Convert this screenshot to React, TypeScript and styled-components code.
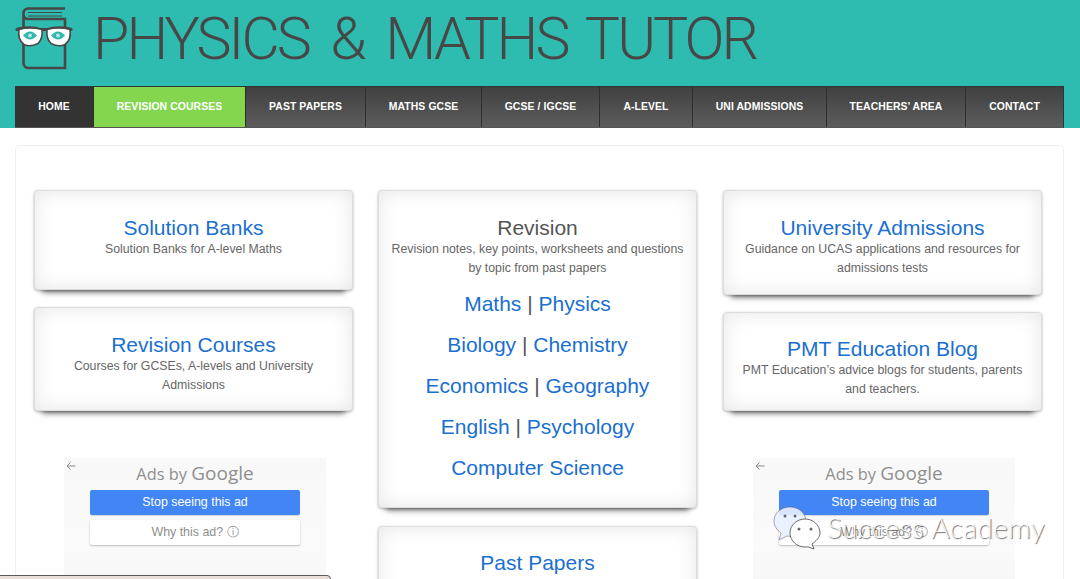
import React from "react";
import styled, { createGlobalStyle } from "styled-components";

const Global = createGlobalStyle`
  html, body { margin: 0; padding: 0; background: #fff; height: 579px; overflow: hidden; }
  body { font-family: "Liberation Sans", Arial, sans-serif; }
  * { box-sizing: border-box; }
`;

const Page = styled.div`
  position: relative;
  width: 1080px;
  height: 579px;
  overflow: hidden;
  background: #fff;
`;

const Header = styled.header`
  height: 128px;
  background: #2fbcb0;
  padding: 0 16px 0 15px;
  display: flex;
  flex-direction: column;
`;

const Brand = styled.div`
  height: 86px;
  display: flex;
  align-items: flex-start;
  color: #474747;
`;

const Logo = styled.svg`
  width: 60px;
  height: 68px;
  margin-top: 5px;
  flex: none;
`;

const BrandName = styled.div`
  margin-left: 18px;
  font-family: Roboto, sans-serif;
  font-weight: 300;
  font-size: 59px;
  line-height: 78px;
  letter-spacing: -2.9px;
  word-spacing: 7px;
  white-space: nowrap;
  color: #474747;
`;

const Amp = styled.span`
  margin: 0 3px;
`;

const Nav = styled.nav`
  display: flex;
  height: 42px;
  border-top: 1px solid #333;
  border-bottom: 1px solid #555;
  border-right: 1px solid #333;
  background: linear-gradient(#404040, #5c5c5c);
`;

const NavItem = styled.a<{ $w: number; $variant?: "home" | "active" }>`
  width: ${(p) => p.$w}px;
  display: flex;
  align-items: center;
  justify-content: center;
  padding-bottom: 2px;
  font-size: 10.4px;
  font-weight: 700;
  color: #fff;
  letter-spacing: 0.1px;
  border-right: 1px solid #2e2e2e;
  background: ${(p) =>
    p.$variant === "home" ? "#333" : p.$variant === "active" ? "#84d64f" : "transparent"};
  &:last-child { border-right: none; }
`;

const Panel = styled.main`
  margin: 17px 16px 0 15px;
  height: 500px;
  border: 1px solid #f0f0f0;
  border-radius: 4px;
  padding: 44px 0 0 18px;
  display: grid;
  grid-template-columns: 319px 320px 319px;
  column-gap: 25px;
  align-items: start;
`;

const Column = styled.div`
  width: 319px;
  display: flex;
  flex-direction: column;
`;

const Card = styled.section<{ $h: number; $gap?: number; $pad?: number }>`
  height: ${(p) => p.$h}px;
  margin-bottom: ${(p) => p.$gap ?? 17}px;
  padding: ${(p) => p.$pad ?? 25}px 10px 0;
  background: #fff;
  border: 1px solid #dcdcdc;
  border-radius: 4px;
  text-align: center;
  box-shadow:
    inset 0 0 20px rgba(0, 0, 0, 0.1),
    0 1px 3px rgba(0, 0, 0, 0.28),
    0 10px 6px -8px rgba(0, 0, 0, 0.6);
`;

const CardTitle = styled.div<{ $plain?: boolean }>`
  font-size: 21px;
  line-height: 24px;
  color: ${(p) => (p.$plain ? "#555" : "#1a6fd0")};
`;

const CardText = styled.div`
  font-size: 12.3px;
  line-height: 18.5px;
  margin-top: 0;
  color: #666;
`;

const LinkList = styled.div`
  margin-top: 6px;
`;

const LinkRow = styled.div`
  font-size: 21px;
  line-height: 41px;
  color: #1a6fd0;
`;

const Sep = styled.span`
  color: #555;
`;

const AdBox = styled.div`
  position: relative;
  width: 262px;
  height: 130px;
  margin: 30px 0 0 30px;
  background: linear-gradient(#f8f8f8, #fafafa 70%, #f6f6f6);
  display: flex;
  flex-direction: column;
  align-items: center;
  padding-top: 4px;
`;

const AdBack = styled.svg`
  position: absolute;
  left: 2px;
  top: 3px;
  width: 10px;
  height: 10px;
`;

const AdsBy = styled.div`
  font-family: "Open Sans", sans-serif;
  font-size: 16.4px;
  line-height: 23px;
  color: #8f8f8f;
`;

const GoogleWord = styled.span`
  font-family: "Open Sans", sans-serif;
  font-weight: 500;
  font-size: 19px;
`;

const StopBtn = styled.div`
  width: 210px;
  height: 25px;
  margin-top: 5px;
  background: #4285f4;
  border-radius: 2px;
  color: #fff;
  font-size: 12.4px;
  line-height: 24px;
  text-align: center;
  box-shadow: 0 1px 1px rgba(0, 0, 0, 0.15);
`;

const WhyBtn = styled.div`
  width: 210px;
  height: 25px;
  margin-top: 5px;
  background: #fff;
  border-radius: 2px;
  color: #8e8e8e;
  font-size: 12.4px;
  line-height: 24px;
  text-align: center;
  box-shadow: 0 1px 2px rgba(0, 0, 0, 0.25);
`;

const Tray = styled.div`
  position: absolute;
  left: -4px;
  bottom: -7px;
  width: 335px;
  height: 11px;
  background: #e9dfd8;
  border: 1px solid #5a5a5a;
  border-radius: 4px;
`;

const Watermark = styled.div`
  position: absolute;
  left: 773px;
  top: 506px;
  display: flex;
  align-items: center;
  pointer-events: none;
`;

const WeChat = styled.svg`
  width: 50px;
  height: 44px;
  flex: none;
`;

const WaterText = styled.div`
  margin-left: 4px;
  margin-top: -3px;
  font-family: Lato, sans-serif;
  font-weight: 300;
  font-size: 28px;
  letter-spacing: 0.4px;
  color: rgba(255, 255, 255, 0.9);
  text-shadow: 1px 1px 1px rgba(60, 60, 60, 0.75);
  white-space: nowrap;
`;

const navItems: [string, number, ("home" | "active")?][] = [
  ["HOME", 79, "home"],
  ["REVISION COURSES", 152, "active"],
  ["PAST PAPERS", 120],
  ["MATHS GCSE", 116],
  ["GCSE / IGCSE", 118],
  ["A-LEVEL", 93],
  ["UNI ADMISSIONS", 134],
  ["TEACHERS’ AREA", 139],
  ["CONTACT", 97],
];

const Ad = () => (
  <AdBox>
    <AdBack viewBox="0 0 10 10" fill="none" stroke="#8a8a8a" strokeWidth="1">
      <path d="M9.500 5H1M4.500 1.500 1 5l3.500 3.500" />
    </AdBack>
    <AdsBy>
      Ads by <GoogleWord>Google</GoogleWord>
    </AdsBy>
    <StopBtn>Stop seeing this ad</StopBtn>
    <WhyBtn>Why this ad? ⓘ</WhyBtn>
  </AdBox>
);

export default function App() {
  return (
    <Page>
      <Global />
      <Header>
        <Brand>
          <Logo viewBox="15 5 60 68" fill="none">
            <path
              d="M65 8.500H28a4.500 4.500 0 0 0-4.500 4.500v50a5 5 0 0 0 5 5H65V19H28a4.500 4.500 0 0 1-4.500-5"
              stroke="#474747"
              strokeWidth="2.600"
            />
            <path d="M28 12.500h34M28 16h34" stroke="#474747" strokeWidth="1.100" />
            <path d="M17 29c9-2 17-2 24 .5h6c7-2.500 15-2.500 24-.5" stroke="#474747" strokeWidth="2.800" />
            <circle cx="17" cy="29.500" r="1.600" fill="#474747" />
            <circle cx="71" cy="29.500" r="1.600" fill="#474747" />
            <path
              d="M19 29.500Q30 26.500 42 29.500Q43 39 38 43.500Q30 47.500 24 44.500Q17.500 40 19 29.500z"
              fill="#fff"
              stroke="#474747"
              strokeWidth="1.600"
            />
            <path
              d="M47 29.500Q59 26.500 70 29.500Q71.500 40 65 44.500Q59 47.500 51 43.500Q46 39 47 29.500z"
              fill="#fff"
              stroke="#474747"
              strokeWidth="1.600"
            />
            <path d="M23 35.500q7-8 14 0q-7 8-14 0z" fill="#2fbcb0" />
            <path d="M51 35.500q7-8 14 0q-7 8-14 0z" fill="#2fbcb0" />
            <circle cx="30" cy="35.500" r="2.800" fill="#8fded7" stroke="#1f9c92" strokeWidth=".8" />
            <circle cx="58" cy="35.500" r="2.800" fill="#8fded7" stroke="#1f9c92" strokeWidth=".8" />
            <circle cx="30" cy="35.500" r=".8" fill="#fff" />
            <circle cx="58" cy="35.500" r=".8" fill="#fff" />
          </Logo>
          <BrandName>
            PHYSICS <Amp>&amp;</Amp> MATHS TUTOR
          </BrandName>
        </Brand>
        <Nav>
          {navItems.map(([label, w, variant]) => (
            <NavItem key={label} $w={w} $variant={variant}>
              {label}
            </NavItem>
          ))}
        </Nav>
      </Header>
      <Panel>
        <Column>
          <Card $h={100}>
            <CardTitle>Solution Banks</CardTitle>
            <CardText>Solution Banks for A-level Maths</CardText>
          </Card>
          <Card $h={104}>
            <CardTitle>Revision Courses</CardTitle>
            <CardText>Courses for GCSEs, A-levels and University Admissions</CardText>
          </Card>
          <Ad />
        </Column>
        <Column>
          <Card $h={318} $gap={18}>
            <CardTitle $plain>Revision</CardTitle>
            <CardText>Revision notes, key points, worksheets and questions by topic from past papers</CardText>
            <LinkList>
              <LinkRow>
                Maths <Sep>|</Sep> Physics
              </LinkRow>
              <LinkRow>
                Biology <Sep>|</Sep> Chemistry
              </LinkRow>
              <LinkRow>
                Economics <Sep>|</Sep> Geography
              </LinkRow>
              <LinkRow>
                English <Sep>|</Sep> Psychology
              </LinkRow>
              <LinkRow>Computer Science</LinkRow>
            </LinkList>
          </Card>
          <Card $h={100} $pad={24}>
            <CardTitle>Past Papers</CardTitle>
          </Card>
        </Column>
        <Column>
          <Card $h={105}>
            <CardTitle>University Admissions</CardTitle>
            <CardText>Guidance on UCAS applications and resources for admissions tests</CardText>
          </Card>
          <Card $h={99} $pad={24}>
            <CardTitle>PMT Education Blog</CardTitle>
            <CardText>PMT Education’s advice blogs for students, parents and teachers.</CardText>
          </Card>
          <Ad />
        </Column>
      </Panel>
      <Tray />
      <Watermark>
        <WeChat viewBox="0 0 50 44" fill="none">
          <path
            d="M17 1C8 1 1 7 1 15c0 5 3 9 7 12l-2 7 8-4c1 0 2 .4 3 .4 9 0 16-7 16-15S26 1 17 1z"
            fill="rgba(232,240,255,.9)"
            stroke="rgba(90,90,90,.5)"
            strokeWidth="1"
          />
          <path
            d="M32 13c-8 0-15 6-15 14s7 14 15 14c1 0 2 0 3-.2l6 2.200-2-5c4-3 8-6.500 8-11 0-8-7-14-15-14z"
            fill="rgba(255,255,255,.95)"
            stroke="rgba(60,60,60,.75)"
            strokeWidth="1"
          />
          <circle cx="12" cy="10" r="1.500" fill="#666" />
          <circle cx="22" cy="10" r="1.500" fill="#666" />
          <circle cx="26" cy="23" r="1.500" fill="#666" />
          <circle cx="38" cy="23" r="1.500" fill="#666" />
        </WeChat>
        <WaterText>Success Academy</WaterText>
      </Watermark>
    </Page>
  );
}
